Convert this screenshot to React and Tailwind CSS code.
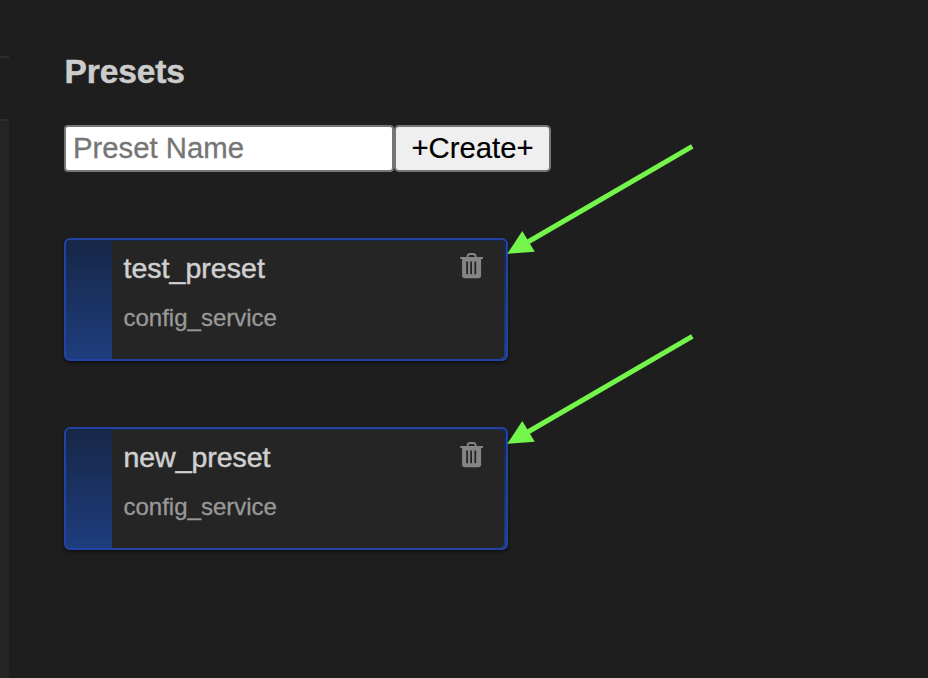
const presets = [
  { name: "test_preset", service: "config_service", tracking: "tracking-[0.03px]" },
  { name: "new_preset", service: "config_service", tracking: "tracking-[-0.05px]" },
];

function TrashIcon() {
  return (
    <svg className="mt-[11px] h-[27px] w-6 shrink-0" viewBox="0 0 24 27" fill="none">
      <path d="M7.5 6V4.8Q7.6 2 10 2H13.2Q15.6 2 15.7 4.8V6" stroke="#858585" strokeWidth="1.8" />
      <path
        fillRule="evenodd"
        fill="#858585"
        d="M0.2 4.9H22.9V7H21.1V23.5Q21.1 26.3 18.3 26.3H4.9Q2.1 26.3 2.1 23.5V7H0.2ZM6.2 9.4V22.2H8V9.4ZM10.2 9.4V22.2H12V9.4ZM14.4 9.4V22.2H16.2V9.4ZM17.6 9.4"
      />
    </svg>
  );
}

function PresetCard({ name, service, tracking }) {
  return (
    <div className="flex h-[123px] w-[444px] rounded-md border-2 border-[#2243a3] bg-linear-to-b from-[#162747] to-[#1f3d7e] pr-0.5 shadow-[0_2px_3px_rgba(0,0,0,0.5)]">
      <div className="w-[46px] shrink-0" />
      <div className="mt-px flex flex-1 justify-between rounded-r-[5px] bg-[#252525] pr-5 pl-[11.5px]">
        <div>
          <div className={`mt-[11px] text-[28.5px] leading-8 text-[#d0d0d0] [-webkit-text-stroke:0.5px_#d0d0d0] ${tracking}`}>{name}</div>
          <div className="mt-5 text-2xl leading-7 text-[#999999] [-webkit-text-stroke:0.3px_#999999]">{service}</div>
        </div>
        <TrashIcon />
      </div>
    </div>
  );
}

function Arrow({ className }) {
  return (
    <svg className={`absolute h-[112px] w-[190px] ${className}`} viewBox="0 0 190 112">
      <path d="M20 102.5L185.3 6.3" stroke="#74f54b" strokeWidth="5" />
      <path d="M0.3 113.8L15.3 91L27.8 111.8Z" fill="#74f54b" />
    </svg>
  );
}

export default function App() {
  return (
    <div className="relative flex h-[678px] w-[928px] overflow-hidden bg-[#1e1e1e] font-['Liberation_Sans',Arial,sans-serif]">
      <aside className="flex w-[9px] shrink-0 flex-col pt-14">
        <div className="h-[65px] border-y-2 border-[#2d2d2d]" />
        <div className="flex-1 bg-[#252525]" />
      </aside>
      <main className="flex flex-col pl-[55px]">
        <h1 className="mt-[52px] pl-[0.5px] text-[33.5px] leading-10 font-bold tracking-[-0.1px] text-[#cccccc] [-webkit-text-stroke:0.5px_#cccccc]">Presets</h1>
        <div className="mt-[33px] flex h-[47px]">
          <input
            aria-label="Preset Name"
            placeholder="Preset Name"
            className="h-[47px] w-[330px] rounded-[4px] border-2 border-[#767676] bg-white px-[7px] pb-0.5 text-[29.3px] text-black outline-none placeholder:text-[#757575] placeholder:opacity-100 placeholder:[-webkit-text-stroke:0.3px_#757575]"
          />
          <button className="h-[47px] w-[157px] rounded-[5px] border-2 border-[#767676] bg-[#efefef] pb-0.5 text-[29.3px] leading-8 text-black [-webkit-text-stroke:0.2px_#000000]">+Create+</button>
        </div>
        <div className="mt-[66px] flex flex-col gap-[66px]">
          {presets.map((preset) => (
            <PresetCard key={preset.name} {...preset} />
          ))}
        </div>
      </main>
      <Arrow className="top-[140px] left-[507px] overflow-visible" />
      <Arrow className="top-[330px] left-[507px] overflow-visible" />
    </div>
  );
}
